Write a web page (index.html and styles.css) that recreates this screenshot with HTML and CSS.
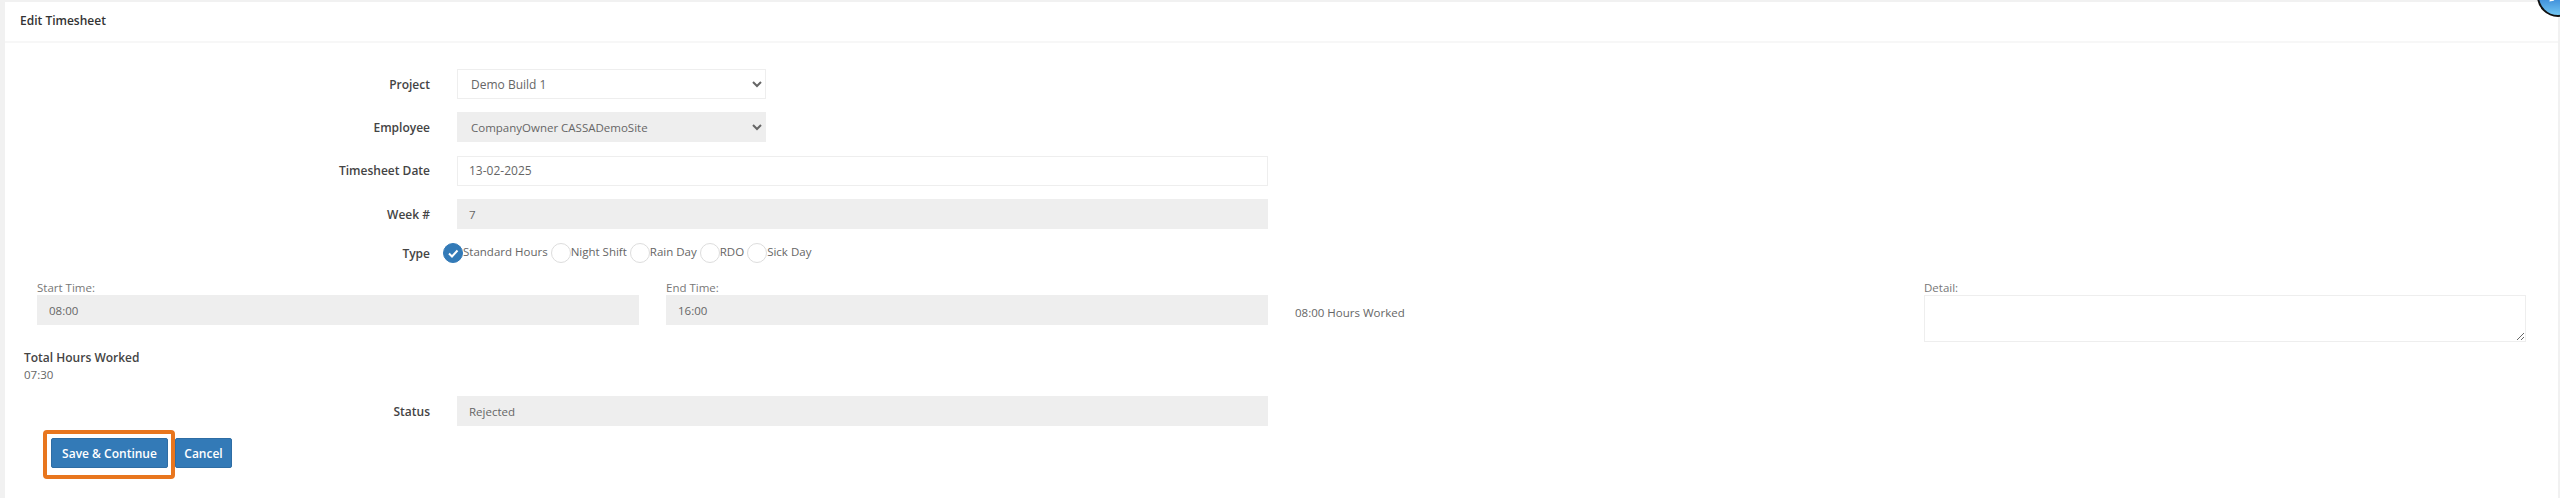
FILE: index.html
```html
<!DOCTYPE html>
<html lang="en">
<head>
    <meta charset="UTF-8">
    <title>Edit Timesheet</title>
    <link rel="stylesheet" href="styles.css">
</head>
<body>
    <div class="panel">
        <div class="panel-heading">Edit Timesheet</div>

        <form class="panel-body" onsubmit="event.preventDefault();">
            <div class="form-row">
                <label class="row-label">Project</label>
                <select class="control control-short">
                    <option>Demo Build 1</option>
                </select>
            </div>
            <div class="form-row">
                <label class="row-label">Employee</label>
                <select class="control control-short is-locked employee">
                    <option>CompanyOwner CASSADemoSite</option>
                </select>
            </div>
            <div class="form-row">
                <label class="row-label">Timesheet Date</label>
                <input class="control date" type="text" value="13-02-2025">
            </div>
            <div class="form-row">
                <label class="row-label">Week #</label>
                <input class="control is-locked" type="text" value="7" readonly>
            </div>

            <div class="form-row type-row">
                <label class="row-label">Type</label>
                <div class="radios">
                    <span class="radio is-checked">
                        <svg viewBox="0 0 20 20" width="20" height="20"><path d="M6 10.5l3 3 5.5-6" fill="none" stroke="#fff" stroke-width="2"/></svg>
                    </span>
                    <span class="radio-text">Standard Hours</span>
                    <span class="radio"></span>
                    <span class="radio-text">Night Shift</span>
                    <span class="radio"></span>
                    <span class="radio-text">Rain Day</span>
                    <span class="radio"></span>
                    <span class="radio-text">RDO</span>
                    <span class="radio"></span>
                    <span class="radio-text">Sick Day</span>
                </div>
            </div>

            <div class="time-row">
                <div>
                    <label class="small-label">Start Time:</label>
                    <input class="control is-locked" type="text" value="08:00" readonly>
                </div>
                <div>
                    <label class="small-label">End Time:</label>
                    <input class="control is-locked" type="text" value="16:00" readonly>
                </div>
                <div class="hours-worked">08:00 Hours Worked</div>
                <div>
                    <label class="small-label">Detail:</label>
                    <textarea class="control detail"></textarea>
                </div>
            </div>

            <div class="total">
                <strong>Total Hours Worked</strong>
                <span>07:30</span>
            </div>

            <div class="form-row status-row">
                <label class="row-label">Status</label>
                <input class="control is-locked" type="text" value="Rejected" readonly>
            </div>

            <div class="actions">
                <span class="highlighted">
                    <button class="btn btn-save" type="submit">Save &amp; Continue</button>
                </span>
                <button class="btn btn-cancel" type="button">Cancel</button>
            </div>
        </form>
    </div>

    <div class="corner-button">
        <svg viewBox="0 0 24 24" width="14" height="14"><path d="M4 20l1-5L16 4l4 4L9 19z" fill="none" stroke="#fff" stroke-width="2.5"/></svg>
    </div>
</body>
</html>
```

FILE: styles.css
```css
* {
    box-sizing: border-box;
}

html,
body {
    height: 100%;
}

body {
    margin: 0;
    padding: 2px 2px 0 5px;
    background-color: #f1f1f1;
    font-family: "Open Sans", sans-serif;
    font-size: 11.5px;
    color: #666;
    overflow: hidden;
}

.panel {
    background-color: #fff;
    height: 100%;
}

.panel-heading {
    height: 41px;
    padding: 0 15px;
    line-height: 38px;
    font-size: 12px;
    font-weight: 600;
    color: #333;
    border-bottom: 2px solid #f7f7f7;
}

.panel-body {
    padding-top: 26px;
}

.form-row {
    display: flex;
    align-items: center;
    gap: 27px;
    margin-bottom: 13.4px;
}

.row-label {
    width: 425px;
    text-align: right;
    font-size: 12px;
    font-weight: 600;
    color: #444;
}

.control {
    display: block;
    width: 100%;
    max-width: 811px;
    height: 30px;
    padding: 0 11px;
    background-color: #fff;
    border: 1px solid #eee;
    border-radius: 0;
    font-family: inherit;
    font-size: 11.5px;
    color: #666;
    outline: none;
}

select.control {
    padding-left: 9px;
    font-size: 12px;
}

select.employee {
    font-size: 11.5px;
}

input.date {
    font-size: 12px;
}

.control-short {
    width: 309px;
}

.is-locked {
    background-color: #eee;
}

.type-row {
    height: 20px;
    margin: 14px 0 0;
}

.radios {
    display: flex;
    align-items: center;
    margin-left: -14px;
    gap: 3px;
}

.radio {
    width: 20px;
    height: 20px;
    border: 1px solid #ddd;
    border-radius: 50%;
    background-color: #fff;
}

.radio.is-checked {
    background-color: #337ab7;
    border-color: #337ab7;
}

.radio.is-checked svg {
    display: block;
    margin: -1px;
}

.radio-text {
    margin-left: -3px;
    margin-top: -3px;
}

.time-row {
    display: grid;
    grid-template-columns: repeat(4, 602px);
    gap: 27px;
    height: 69px;
    margin-top: 17px;
    padding-left: 32px;
}

.small-label {
    display: block;
    height: 15px;
    line-height: 15px;
    color: #777;
}

.hours-worked {
    padding-top: 25px;
    line-height: 16px;
}

.detail {
    height: 47px;
}

.total {
    display: flex;
    flex-direction: column;
    padding-left: 19px;
    line-height: 17px;
}

.total strong {
    font-size: 12px;
    font-weight: 600;
    color: #444;
}

.status-row {
    margin-top: 13px;
    margin-bottom: 12px;
}

.actions {
    display: flex;
    gap: 7px;
    padding-left: 46px;
}

.btn {
    height: 30px;
    padding: 0;
    background-color: #337ab7;
    border: 1px solid #2e6da4;
    border-radius: 2px;
    font-family: inherit;
    font-size: 12px;
    font-weight: 600;
    color: #fff;
    cursor: pointer;
}

.btn-save {
    width: 117px;
}

.btn-cancel {
    width: 57px;
}

.highlighted {
    position: relative;
    display: block;
}

/* orange callout around the main button */
.highlighted::after {
    content: "";
    position: absolute;
    left: -8px;
    right: -7px;
    top: -8px;
    bottom: -11px;
    border: 4px solid #e8761e;
    border-radius: 4px;
    pointer-events: none;
}

.corner-button {
    position: absolute;
    top: -25px;
    left: 2537px;
    width: 42px;
    height: 42px;
    padding: 0 0 12px 9px;
    display: flex;
    align-items: flex-end;
    border: 2px solid #111;
    border-radius: 50%;
    background: linear-gradient(#2a78d0 40%, #72c6f2);
}
```
